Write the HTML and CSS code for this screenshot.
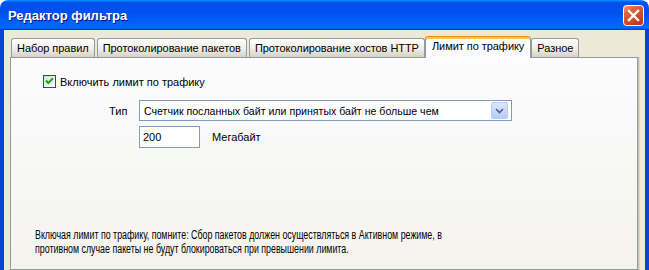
FILE: index.html
```html
<!DOCTYPE html>
<html lang="ru">
<head>
    <meta charset="UTF-8">
    <title>Редактор фильтра</title>
	<link rel="stylesheet" href="styles.css">
</head>
<body>
<div class="window">
	<!-- заголовок окна -->
	<div class="titlebar">
		<span class="title">Редактор фильтра</span>
		<div class="close">
			<svg width="21" height="21" viewBox="0 0 21 21">
				<defs>
					<linearGradient id="cg" x1="0" y1="0" x2="0.6" y2="1">
						<stop offset="0" stop-color="#F0A088"/>
						<stop offset="0.35" stop-color="#E0623C"/>
						<stop offset="1" stop-color="#C13B14"/>
					</linearGradient>
				</defs>
				<rect x="0.5" y="0.5" width="20" height="20" rx="3" fill="url(#cg)" stroke="#fff"/>
				<path d="M6 6 L15 15 M15 6 L6 15" stroke="#fff" stroke-width="2.4" stroke-linecap="square"/>
			</svg>
		</div>
	</div>
	<div class="frame">
		<div class="client">
			<!-- вкладки -->
			<div class="tabs">
				<div class="tab">Набор правил</div>
				<div class="tab">Протоколирование пакетов</div>
				<div class="tab">Протоколирование хостов HTTP</div>
				<div class="tab active">Лимит по трафику</div>
				<div class="tab">Разное</div>
			</div>
			<div class="panel">
				<div class="check">
					<span class="box">
						<svg width="11" height="11" viewBox="0 0 11 11">
							<path d="M2 4.5 L4.3 7 L9 2.3" fill="none" stroke="#21A121" stroke-width="2"/>
						</svg>
					</span>
					<span>Включить лимит по трафику</span>
				</div>
				<div class="form">
					<span class="lbl">Тип</span>
					<div class="select">
						<span class="value">Счетчик посланных байт или принятых байт не больше чем</span>
						<span class="drop">
							<svg width="9" height="6" viewBox="0 0 9 6">
								<path d="M1 1 L4.5 4.5 L8 1" fill="none" stroke="#4D6185" stroke-width="1.6"/>
							</svg>
						</span>
					</div>
					<span></span>
					<div class="amount">
						<div class="input">200</div>
						<span class="unit">Мегабайт</span>
					</div>
				</div>
				<p class="note">
					Включая лимит по трафику, помните: Сбор пакетов должен осуществляться в Активном режиме, в<br>
					противном случае пакеты не будут блокироваться при превышении лимита.
				</p>
			</div>
		</div>
	</div>
</div>
</body>
</html>
```

FILE: styles.css
```css
body{
	margin: 0;
	background: #fff;
	overflow: hidden;
	font-family: "Liberation Sans", Arial, sans-serif;
	font-size: 11px;
	color: #000;
}
.window{
	width: 649px;
	height: 270px;
	display: flex;
	flex-direction: column;
}
.titlebar{
	height: 30px;
	display: flex;
	align-items: center;
	justify-content: space-between;
	padding: 0 5px 0 8px;
	border-radius: 8px 8px 0 0;
	background: linear-gradient(180deg, #0997ff, #0053ee 8%, #0050ee 40%, #0066ff 88%, #0066ff 93%, #005bff 95%, #003dd7 96%, #003dd7);
}
.title{
	color: #fff;
	font-weight: bold;
	font-size: 13px;
	text-shadow: 1px 1px #0f1089;
	padding-top: 1px;
}
.close{
	width: 21px;
	height: 21px;
	margin-top: 1px;
}
.close svg{
	display: block;
}
.frame{
	flex: 1;
	display: flex;
	border-left: 4px solid #0842d9;
	border-right: 4px solid #0842d9;
	box-shadow: inset 1px 0 #0019cf, inset -1px 0 #0019cf;
}
.client{
	flex: 1;
	background: #ece9d8;
	display: flex;
	flex-direction: column;
	padding: 6px 7px 0 6px;
}
.tabs{
	height: 21px;
	display: flex;
	align-items: flex-end;
	padding-left: 1px;
	gap: 2px;
}
.tab{
	height: 18px;
	line-height: 18px;
	padding: 0 5px;
	border: 1px solid #919b9c;
	border-bottom: none;
	border-radius: 3px 3px 0 0;
	background: linear-gradient(180deg, #fff, #ecebe5 60%, #d8d0c4);
	white-space: nowrap;
	letter-spacing: -0.05px;
}
.tab.active{
	position: relative;
	z-index: 1;
	height: 21px;
	line-height: 19px;
	margin: 0 -2px -1px;
	padding: 0 6px;
	background: #fcfcfe;
	border-top: 1px solid #e68b2c;
	box-shadow: inset 0 2px #ffc83c;
}
.panel{
	flex: 1;
	border: 1px solid #919b9c;
	background: linear-gradient(180deg, #fcfcfe, #f4f3ee);
	box-shadow: 1px 0 #c5c2b2, 2px 0 #dcd9c8;
	padding: 17px 0 0 32px;
}
.check{
	display: flex;
	align-items: center;
	height: 13px;
	gap: 4px;
}
.box{
	width: 11px;
	height: 11px;
	border: 1px solid #1c5180;
	background: linear-gradient(135deg, #dcdcd7, #fff);
}
.box svg{
	display: block;
}
.form{
	display: grid;
	grid-template-columns: 30px 373px;
	row-gap: 5px;
	margin: 12px 0 0 66px;
	align-items: center;
}
.select{
	height: 19px;
	border: 1px solid #7f9db9;
	background: #fff;
	display: flex;
	align-items: center;
	justify-content: space-between;
	padding: 0 3px 0 4px;
}
.value{
	font-size: 10.6px;
}
.drop{
	width: 15px;
	height: 15px;
	border: 1px solid #b9cbf5;
	border-radius: 2px;
	background: linear-gradient(180deg, #dce6fd, #b8cbf7);
	display: flex;
	align-items: center;
	justify-content: center;
}
.amount{
	display: flex;
	align-items: center;
	gap: 12px;
}
.input{
	width: 56px;
	height: 20px;
	line-height: 20px;
	border: 1px solid #7f9db9;
	background: #fff;
	padding-left: 3px;
}
/* в оригинале узкий шрифт, сжимаем обычный */
.note{
	margin: 80px 0 0 -8px;
	line-height: 14px;
	font-size: 12.5px;
	white-space: nowrap;
	transform: scaleX(0.708);
	transform-origin: 0 0;
}
```
